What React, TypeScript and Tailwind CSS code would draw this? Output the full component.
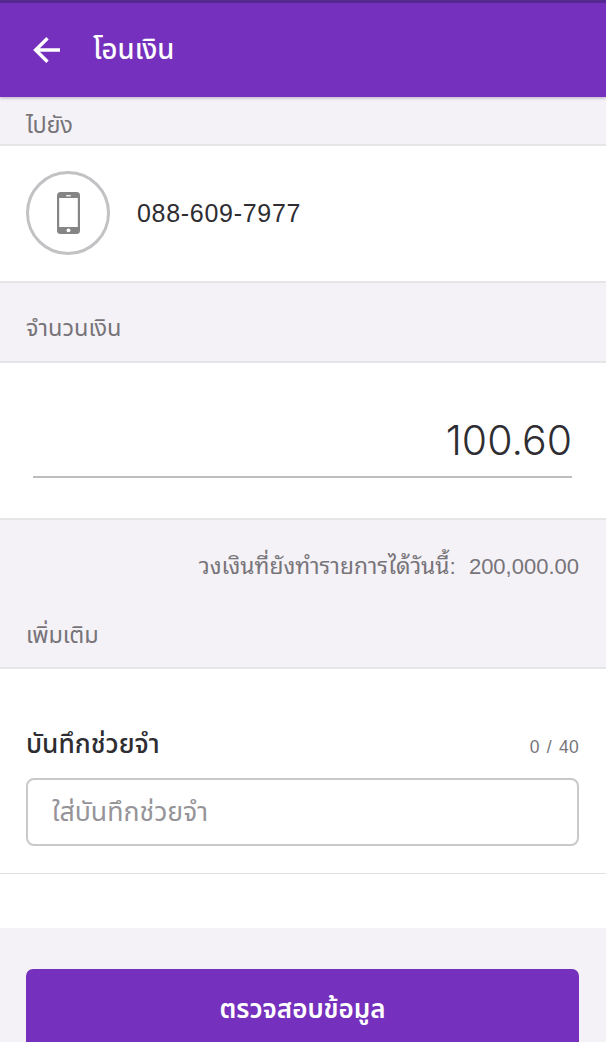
import React from 'react';

const SectionTitle = ({ className, children }: { className: string; children: React.ReactNode }) => (
    <div className={`shrink-0 bg-[#f4f2f6] text-[#77747a] px-[26px] text-[23.5px] leading-[36px] border-b-2 border-[#e6e5e8] ${className}`}>
        {children}
    </div>
);

const App = () => {
    const [note, setNote] = React.useState<string>('');

    return (
        <div className="w-full h-[1042px] overflow-hidden bg-white flex flex-col font-['Liberation_Sans','Noto_Sans_Thai',sans-serif] text-[#2e2d32]">
            {/* Header */}
            <header className="relative z-10 h-[97px] shrink-0 bg-[#7530bd] border-t-[3px] border-[#542890] shadow-[0_1px_3px_rgba(70,30,110,0.35)] flex items-center pl-[33px] text-white">
                <svg className="w-[27px] h-[26px]" viewBox="0 0 27 26" fill="none" stroke="currentColor" strokeWidth="3.400">
                    <path d="M27 13H3M14.500 1.300L2.600 13L14.500 24.700" />
                </svg>
                <h1 className="ml-[33px] text-[27.5px] font-medium leading-[40px]">โอนเงิน</h1>
            </header>

            {/* Recipient */}
            <SectionTitle className="h-[49px] pt-[10px]">
                <h2 className="tracking-[-0.3px]">ไปยัง</h2>
            </SectionTitle>
            <div className="h-[135px] shrink-0 flex items-center px-[26px]">
                <div className="size-[84px] -mt-px rounded-full border-[3px] border-[#c3c1c4] flex items-center justify-center">
                    <svg className="w-[23px] h-[42px] -mt-px" viewBox="0 0 23 42">
                        <rect width="23" height="42" rx="3.500" fill="#858585" />
                        <rect x="2.200" y="6" width="18.600" height="29" fill="#fff" />
                        <rect x="9" y="3" width="5" height="1.500" rx="0.700" fill="#eee" />
                        <circle cx="11.500" cy="38.300" r="1.900" fill="#fff" />
                    </svg>
                </div>
                <div className="ml-[27px] text-[25px] tracking-[0.7px]">088-609-7977</div>
            </div>

            {/* Amount */}
            <SectionTitle className="h-[82px] border-t-2 pt-[27px]">
                <h2>จำนวนเงิน</h2>
            </SectionTitle>
            <div className="h-[155px] shrink-0 pl-[33px] pr-[34px] pt-[50px]">
                <div className="h-[65px] border-b-2 border-[#bdbdbd] text-right font-['Inter'] text-[41px] font-light leading-[54px]">100.60</div>
            </div>

            {/* Daily limit */}
            <SectionTitle className="h-[151px] border-t-2 pt-[28px]">
                <div className="flex justify-end items-baseline gap-[13px] pr-px font-['Liberation_Sans','Noto_Sans_Thai_Looped','Loma','Garuda',sans-serif]">
                    <span className="text-[22.800px]">วงเงินที่ยังทำรายการได้วันนี้:</span>
                    <span className="text-[22px]">200,000.00</span>
                </div>
                <h2 className="mt-[32px] tracking-[-0.15px]">เพิ่มเติม</h2>
            </SectionTitle>

            {/* Memo */}
            <div className="h-[205px] shrink-0 border-b border-[#e2e1e4] pl-[26px] pr-[27px] pt-[51px]">
                <div className="flex items-center justify-between h-[46px] mb-[12px]">
                    <label className="mt-[3px] text-[26.3px] font-medium">บันทึกช่วยจำ</label>
                    <span className="mt-[8px] text-[17.500px] tracking-[0.3px] word-spacing-normal text-[#77747a] flex gap-[7px]">
                        <span>{note.length}</span>
                        <span>/</span>
                        <span>40</span>
                    </span>
                </div>
                <input
                    className="block w-full h-[68px] border-2 border-[#c9c8cb] rounded-[8px] px-[24px] text-[26.700px] placeholder:text-[#969498] outline-none"
                    placeholder="ใส่บันทึกช่วยจำ"
                    maxLength={40}
                    value={note}
                    onChange={(e) => setNote(e.target.value)}
                />
            </div>
            <div className="h-[54px] shrink-0" />

            {/* Submit */}
            <div className="flex-1 bg-[#f4f2f6] pl-[26px] pr-[27px] pt-[41px]">
                <button className="w-full h-[80px] bg-[#7530bd] text-white rounded-[7px] text-[26px] font-semibold">ตรวจสอบข้อมูล</button>
            </div>
        </div>
    );
};

export default App;
